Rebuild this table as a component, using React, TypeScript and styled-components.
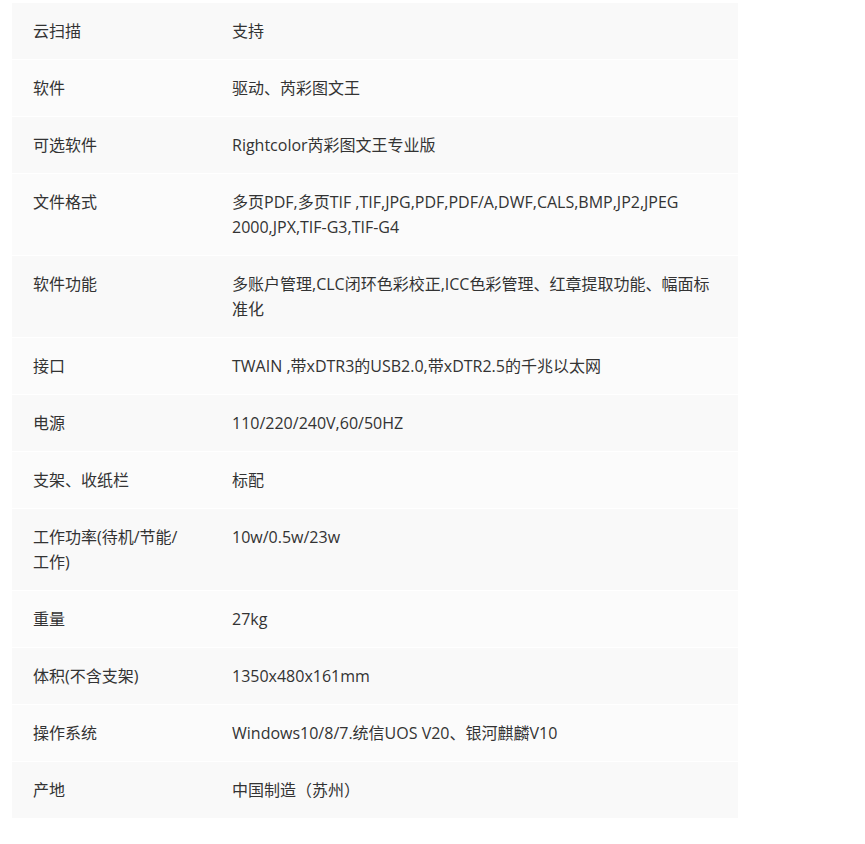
import React from "react";
import styled, { createGlobalStyle } from "styled-components";

const specs: [string, string][] = [
  ["云扫描", "支持"],
  ["软件", "驱动、芮彩图文王"],
  ["可选软件", "Rightcolor芮彩图文王专业版"],
  ["文件格式", "多页PDF,多页TIF ,TIF,JPG,PDF,PDF/A,DWF,CALS,BMP,JP2,JPEG 2000,JPX,TIF-G3,TIF-G4"],
  ["软件功能", "多账户管理,CLC闭环色彩校正,ICC色彩管理、红章提取功能、幅面标准化"],
  ["接口", "TWAIN ,带xDTR3的USB2.0,带xDTR2.5的千兆以太网"],
  ["电源", "110/220/240V,60/50HZ"],
  ["支架、收纸栏", "标配"],
  ["工作功率(待机/节能/工作)", "10w/0.5w/23w"],
  ["重量", "27kg"],
  ["体积(不含支架)", "1350x480x161mm"],
  ["操作系统", "Windows10/8/7.统信UOS V20、银河麒麟V10"],
  ["产地", "中国制造（苏州）"],
];

const GlobalStyle = createGlobalStyle`
  body {
    margin: 0;
    background: #fff;
    font-family: "Open Sans", "Noto Sans CJK SC", sans-serif;
  }
`;

const Page = styled.div`
  padding: 3px 0 0 12px;
`;

const Table = styled.table`
  width: 726px;
  border-collapse: collapse;
  table-layout: fixed;
  font-size: 16px;
  line-height: 25px;
  color: #333;
`;

const Row = styled.tr<{ $odd: boolean }>`
  background: ${(p) => (p.$odd ? "#f9f9f9" : "#fbfbfb")};
  border-bottom: 1px solid #fff;
`;

const Label = styled.td`
  width: 160px;
  padding: 16px 18px 15px 21px;
  vertical-align: top;
`;

const Value = styled.td`
  padding: 16px 21px 15px 21px;
  vertical-align: top;
`;

export default function App() {
  return (
    <>
      <GlobalStyle />
      <Page>
        <Table>
          <tbody>
            {specs.map(([k, v], i) => (
              <Row key={k} $odd={i % 2 === 0}>
                <Label>{k}</Label>
                <Value>{v}</Value>
              </Row>
            ))}
          </tbody>
        </Table>
      </Page>
    </>
  );
}
